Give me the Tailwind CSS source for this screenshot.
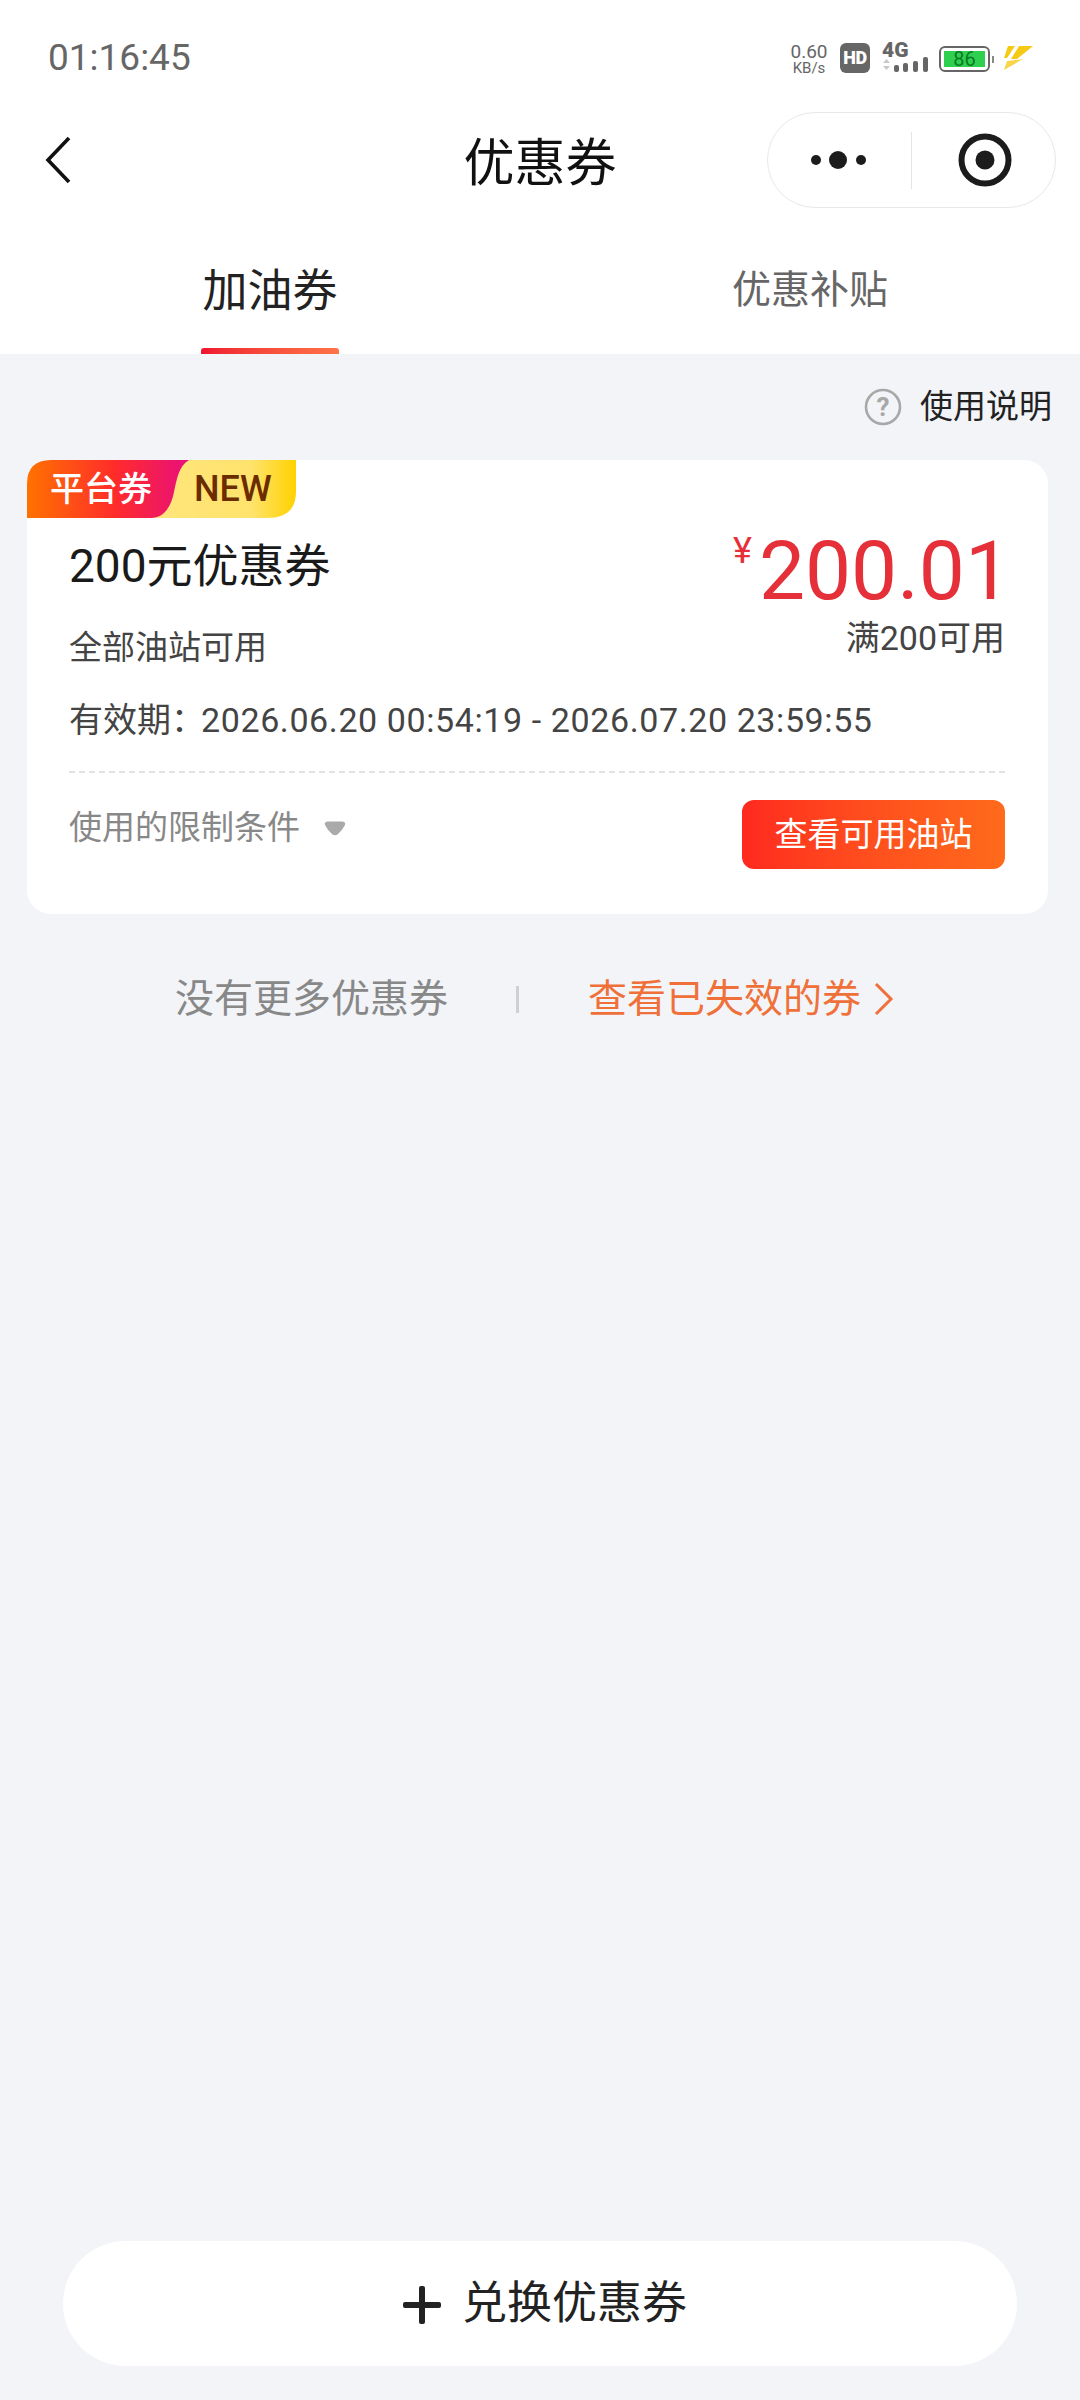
<!DOCTYPE html>
<html lang="zh-CN">
<head>
  <meta charset="UTF-8">
  <meta name="viewport" content="width=device-width, initial-scale=1.0">
  <title>优惠券</title>
  <script src="https://cdn.jsdelivr.net/npm/@tailwindcss/browser@4"></script>
</head>
<body class="bg-[#f2f4f8] font-[Roboto,'Noto_Sans_CJK_SC',sans-serif]">
  <div class="w-[1080px] h-[2400px] flex flex-col">

    <!-- Header -->
    <div class="bg-white h-[354px] shrink-0">

      <!-- Status bar -->
      <div class="h-[112px] pl-[48px] pr-[45px] flex justify-between items-start">
        <span class="mt-[35px] text-[37px] leading-[46px] text-[#666666]">01:16:45</span>
        <div class="mt-[43px] flex items-start">
          <div class="w-[38px] flex flex-col items-center text-[#666666]">
            <span class="text-[19px] leading-[17px]">0.60</span>
            <span class="text-[15px] leading-[15px] mt-[1px]">KB/s</span>
          </div>
          <div class="ml-[12px] w-[30px] h-[30px] rounded-[6px] bg-[#666666] flex items-center justify-center text-white text-[18px] leading-none font-black tracking-[-0.5px]">HD</div>
          <div class="ml-[12px] w-[47px] h-[30px] relative">
            <span class="absolute left-0 top-[-3px] text-[21px] leading-[20px] font-black text-[#666666] font-[Roboto,sans-serif]">4G</span>
            <svg class="absolute left-0 top-[14px]" width="47" height="16" viewBox="0 0 47 16">
              <path d="M1 6 L4.5 2 L8 6Z M1 9 L8 9 L4.5 13Z" fill="#c8c8c8"/>
              <rect x="12" y="8" width="5" height="7" rx="2" fill="#666666"/>
              <rect x="21" y="6" width="5" height="9" rx="2" fill="#666666"/>
              <rect x="31" y="4" width="5" height="11" rx="2" fill="#666666"/>
              <rect x="41" y="0" width="5" height="15" rx="2" fill="#666666"/>
            </svg>
          </div>
          <div class="ml-[10px] mt-[3px] flex items-center">
            <div class="w-[51px] h-[26px] rounded-[6px] border-2 border-[#666666] p-[3px] flex">
              <div class="flex-1 bg-[#2fd04f] flex items-center justify-center text-[20px] leading-none text-[#0b7a25]">86</div>
            </div>
            <div class="ml-[2px] w-[2px] h-[7px] bg-[#888888]"></div>
          </div>
          <svg class="ml-[9px] mt-[2px]" width="32" height="26" viewBox="0 0 32 26">
            <polygon points="5,1 12,1 4,13 1,13" fill="#f6c915"/>
            <polygon points="16,1 30,1 14,14 8,14" fill="#f6c915"/>
            <polygon points="4,16 20,14 1,25" fill="#f8d64a"/>
          </svg>
        </div>
      </div>

      <!-- Nav bar -->
      <div class="h-[96px] pl-[45px] pr-[24px] relative flex items-center justify-between">
        <svg width="26" height="48" viewBox="0 0 26 48" fill="none" stroke="#111111" stroke-width="3.6">
          <path d="M24 2 L3 24 L24 46"/>
        </svg>
        <h1 class="absolute left-0 right-0 top-[22px] text-center text-[51px] leading-[60px] text-[#111111] pointer-events-none">优惠券</h1>
        <div class="w-[289px] h-[96px] rounded-full bg-white border border-[#e8e8e8] flex items-center">
          <svg class="ml-[43px]" width="60" height="20" viewBox="0 0 60 20" fill="#1c1c1c">
            <circle cx="5" cy="10" r="5"/>
            <circle cx="27" cy="10" r="9"/>
            <circle cx="50" cy="10" r="5"/>
          </svg>
          <div class="ml-[40px] w-[1px] h-[57px] bg-[#e4e4e4]"></div>
          <svg class="ml-[46px]" width="54" height="54" viewBox="0 0 54 54">
            <circle cx="27" cy="27" r="23.5" fill="none" stroke="#1c1c1c" stroke-width="6"/>
            <circle cx="27" cy="27" r="9.5" fill="#1c1c1c"/>
          </svg>
        </div>
      </div>

      <!-- Tabs -->
      <div class="h-[146px] grid grid-cols-2">
        <div class="relative flex justify-center pt-[54px]">
          <span class="text-[45px] leading-[60px] text-[#222222]">加油券</span>
          <div class="absolute bottom-0 left-[201px] w-[138px] h-[6px] rounded-t-[3px] bg-gradient-to-r from-[#ee1230] to-[#ff7348]"></div>
        </div>
        <div class="flex justify-center pt-[57px]">
          <span class="text-[39px] leading-[50px] text-[#666666]">优惠补贴</span>
        </div>
      </div>
    </div>

    <!-- Usage link -->
    <div class="h-[106px] shrink-0 pr-[28px] flex items-center justify-end">
      <svg width="38" height="38" viewBox="0 0 38 38">
        <circle cx="19" cy="19" r="17" fill="none" stroke="#a8a8a8" stroke-width="2.6"/>
        <text x="19" y="28" text-anchor="middle" font-size="26" font-weight="700" fill="#a8a8a8" font-family="Roboto, sans-serif">?</text>
      </svg>
      <span class="ml-[18px] text-[33px] leading-[44px] text-[#222222]">使用说明</span>
    </div>

    <!-- Coupon card -->
    <div class="mx-[27px] w-[1021px] h-[454px] shrink-0 relative bg-white rounded-[24px] pl-[42px] pr-[43px] pt-[76px]">

      <!-- Badge -->
      <div class="absolute left-0 top-0 w-[269px] h-[58px]">
        <svg class="absolute inset-0" width="269" height="58" viewBox="0 0 269 58">
          <defs>
            <linearGradient id="badgeRed" x1="0" y1="0" x2="1" y2="0">
              <stop offset="0" stop-color="#ff7200"/>
              <stop offset="0.55" stop-color="#ff2b2b"/>
              <stop offset="1" stop-color="#e80f7c"/>
            </linearGradient>
            <linearGradient id="badgeYellow" x1="0" y1="0" x2="1" y2="0">
              <stop offset="0" stop-color="#ffe57e"/>
              <stop offset="0.7" stop-color="#ffe36c"/>
              <stop offset="1" stop-color="#ffd200"/>
            </linearGradient>
          </defs>
          <path d="M130 0 H269 V32 Q269 58 240 58 H120Z" fill="url(#badgeYellow)"/>
          <path d="M24 0 H162 C152 6 150 18 147 32 C144 48 136 58 124 58 H0 V24 Q0 0 24 0Z" fill="url(#badgeRed)"/>
        </svg>
        <span class="absolute left-[23px] top-[7px] text-[34px] leading-[44px] font-medium text-white">平台券</span>
        <span class="absolute left-[167px] top-[7px] text-[36px] leading-[44px] font-medium text-[#6b2c00]">NEW</span>
      </div>

      <!-- Title and amount -->
      <div class="flex justify-between items-start">
        <div>
          <div class="text-[46px] leading-[60px] text-[#1a1a1a]">200元优惠券</div>
          <div class="mt-[28px] text-[33px] leading-[48px] text-[#444444]">全部油站可用</div>
        </div>
        <div class="flex flex-col items-end">
          <div class="-mt-[5px] -mr-[6px] flex items-start text-[#e5303a]">
            <span class="mt-[0px] mr-[7px] text-[36px] leading-[40px]">¥</span>
            <span class="text-[82px] leading-[80px]">200.01</span>
          </div>
          <div class="mt-[3px] text-[34px] leading-[48px] text-[#444444]">满200可用</div>
        </div>
      </div>

      <!-- Validity -->
      <div class="mt-[24px] text-[34px] leading-[48px] text-[#444444]">有效期：<span class="-ml-[4px] tracking-[0.6px]">2026.06.20 00:54:19 - 2026.07.20 23:59:55</span></div>

      <div class="mt-[27px] border-t-2 border-dashed border-[#e2e2e2]"></div>

      <!-- Conditions and action -->
      <div class="mt-[27px] flex justify-between items-start">
        <div class="h-[54px] flex items-center text-[33px] leading-[44px] text-[#888888]">
          <span class="mt-[1px]">使用的限制条件</span>
          <svg class="ml-[24px] mt-[2px]" width="22" height="15" viewBox="0 0 22 15">
            <path d="M4 0.5 H18 Q22 0.5 21 4 Q18 10 13.5 13.5 Q11 15 8.5 13.5 Q4 10 1 4 Q0 0.5 4 0.5Z" fill="#aaaaaa"/>
          </svg>
        </div>
        <button class="w-[263px] h-[69px] rounded-[12px] bg-gradient-to-r from-[#ff281f] to-[#ff6a1b] text-white text-[33px] leading-none">查看可用油站</button>
      </div>
    </div>

    <!-- List end -->
    <div class="mt-[55px] h-[60px] shrink-0 relative flex items-center text-[39px] leading-[60px]">
      <span class="ml-[175px] text-[#888888]">没有更多优惠券</span>
      <div class="ml-[68px] w-[3px] h-[27px] bg-[#d0d0d0]"></div>
      <span class="ml-[69px] text-[#f0703a]">查看已失效的券</span>
      <svg class="ml-[13px]" width="20" height="34" viewBox="0 0 20 34" fill="none" stroke="#f0703a" stroke-width="3">
        <path d="M2 2 L17 17 L2 32"/>
      </svg>
    </div>

    <!-- Redeem button -->
    <div class="mt-auto mb-[34px] mx-[63px] h-[125px] rounded-full bg-white flex items-center justify-center pl-[9px]">
      <svg class="mt-[3px]" width="40" height="40" viewBox="0 0 40 40" fill="#222222">
        <rect x="17" y="1" width="6" height="38" rx="2"/>
        <rect x="1" y="17" width="38" height="6" rx="2"/>
      </svg>
      <span class="ml-[20px] mt-[1px] text-[45px] leading-[60px] text-[#222222]">兑换优惠券</span>
    </div>
  </div>
</body>
</html>
